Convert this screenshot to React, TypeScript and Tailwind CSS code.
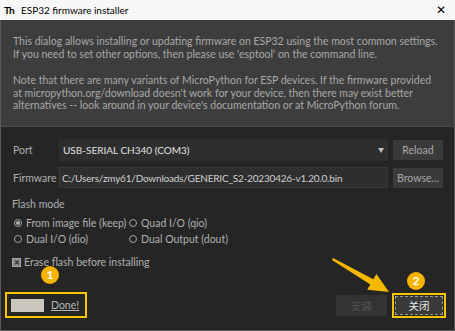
import React from 'react';

const font = { fontFamily: 'Lato, "Noto Sans CJK SC", sans-serif' };

const Radio = ({ checked, label }: { checked?: boolean; label: string }) => (
    <div className="flex items-center gap-[4px] h-[14px]">
        <span className="w-[8px] h-[8px] rounded-full border border-[#a0a0a0] flex items-center justify-center">
            {checked && <span className="w-[4px] h-[4px] rounded-full bg-[#b5b5b5]" />}
        </span>
        <span>{label}</span>
    </div>
);

const Badge = ({ n, className }: { n: string; className: string }) => (
    <div className={"absolute w-[18px] h-[18px] rounded-full bg-[#f5b400] text-white text-[12px] font-bold flex items-center justify-center leading-none " + className}>
        {n}
    </div>
);

export default function App() {
    return (
        <div className="relative w-[455px] h-[331px] flex flex-col overflow-hidden whitespace-nowrap" style={font}>
            {/* Title bar */}
            <div className="h-[20px] shrink-0 bg-[#f7f7f7] flex items-center pl-[4px] pr-[9px] text-[10px] text-black">
                <span className="w-[13px] text-[10px] font-bold leading-none tracking-[-1px]">Th</span>
                <span className="ml-[4px]">ESP32 firmware installer</span>
                <span className="ml-auto text-[12px] leading-none">✕</span>
            </div>

            <div className="flex-1 flex flex-col border-x border-b border-[#5a5a5a]">
                {/* Intro */}
                <div className="h-[107px] shrink-0 bg-[#3d3d3d] px-[12px] pt-[15px] text-[10.5px] leading-[12.5px] text-[#a8a8a8] border-b border-[#4a4a4a]">
                    <p>This dialog allows installing or updating firmware on ESP32 using the most common settings.<br />If you need to set other options, then please use 'esptool' on the command line.</p>
                    <p className="mt-[14px]">Note that there are many variants of MicroPython for ESP devices. If the firmware provided<br />at micropython.org/download doesn't work for your device, then there may exist better<br />alternatives -- look around in your device's documentation or at MicroPython forum.</p>
                </div>

                {/* Form */}
                <div className="flex-1 bg-[#252525] px-[10px] pt-[12px] text-[10.5px] leading-[14px] text-[#b0b0b0]">
                    <div className="flex items-center h-[22px]">
                        <span className="w-[48px] shrink-0 pl-[2px]">Port</span>
                        <div className="w-[329px] shrink-0 h-[22px] bg-[#2e2e2e] flex items-center pl-[4px] pr-[4px] text-[10px] text-[#e2e2e2]">
                            <span>USB-SERIAL CH340 (COM3)</span>
                            <span className="ml-auto text-[6px] text-[#c0c0c0]">▼</span>
                        </div>
                        <div className="ml-[5px] w-[50px] h-[20px] bg-[#3a3a3a] flex items-center justify-center text-[#a8a8a8]">Reload</div>
                    </div>
                    <div className="flex items-center h-[21px] mt-[6px]">
                        <span className="w-[48px] shrink-0 pl-[2px]">Firmware</span>
                        <div className="w-[329px] shrink-0 h-[21px] bg-[#2e2e2e] border border-[#3a3a3a] flex items-center pl-[2px] text-[10px] tracking-[-0.2px] text-[#d0d0d0]">
                            C:/Users/zmy61/Downloads/GENERIC_S2-20230426-v1.20.0.bin
                        </div>
                        <div className="ml-[5px] w-[50px] h-[20px] bg-[#3a3a3a] flex items-center justify-center text-[#a8a8a8]">Browse...</div>
                    </div>

                    <div className="mt-[9px] pl-[1px]">Flash mode</div>
                    <div className="grid grid-cols-[115px_1fr] gap-y-[2px] mt-[5px] pl-[3px]">
                        <Radio checked label="From image file (keep)" />
                        <Radio label="Quad I/O (qio)" />
                        <Radio label="Dual I/O (dio)" />
                        <Radio label="Dual Output (dout)" />
                    </div>

                    <div className="flex items-center gap-[3px] mt-[9px] pl-[1px] h-[14px]">
                        <span className="w-[9px] h-[9px] bg-[#8a8a8a] border border-[#a8a8a8] flex items-center justify-center text-[7px] leading-none text-[#2a2a2a] font-bold">✕</span>
                        <span>Erase flash before installing</span>
                    </div>

                    <div className="flex items-start mt-[23px]">
                        <div className="-ml-[6px] w-[82px] h-[26px] border-2 border-[#f5c400] flex items-center pl-[4px] gap-[7px]">
                            <div className="w-[33px] h-[13px] bg-[#cac6bb]" />
                            <span className="underline text-[#b8b8b8]">Done!</span>
                        </div>
                        <div className="ml-auto mt-[3px] w-[51px] h-[21px] bg-[#333333] flex items-center justify-center text-[#555555]">安装</div>
                        <div className="ml-[5px] -mr-[2px] mt-[1px] w-[54px] h-[25px] border-2 border-[#f5c400] p-[1px]">
                            <div className="w-full h-full bg-[#3a3a3a] border border-dashed border-[#9a9a9a] flex items-center justify-center text-[#eaeaea]">关闭</div>
                        </div>
                    </div>
                </div>
            </div>

            {/* Annotations */}
            <Badge n="1" className="left-[41px] top-[266px]" />
            <Badge n="2" className="left-[407px] top-[272px]" />
            <svg className="absolute left-0 top-0 pointer-events-none" width="455" height="331">
                <polygon points="333,258 373.3,279.3 376.4,274.1 389,292 367.2,289.7 370.3,284.5 332,260" fill="#f5b800" />
            </svg>
        </div>
    );
}
